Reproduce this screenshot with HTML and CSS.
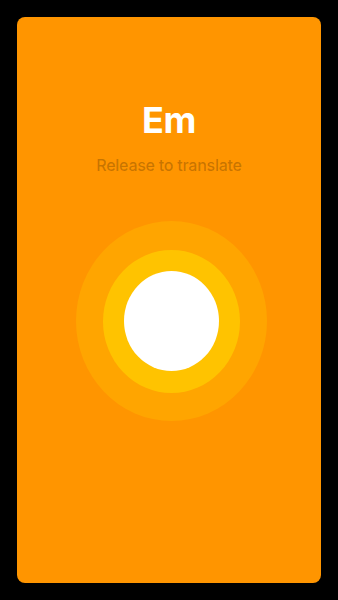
FILE: index.html
```html
<!DOCTYPE html>
<html>
<head>
<meta charset="utf-8">
<link rel="stylesheet" href="styles.css">
</head>
<body>
<div class="card">
  <div class="title">Em</div>
  <div class="hint">Release to translate</div>
  <div class="ring-outer">
    <div class="ring-middle">
      <div class="ring-inner"></div>
    </div>
  </div>
</div>
</body>
</html>
```
FILE: styles.css
```css
html, body {
  margin: 0;
  padding: 0;
  background: #000;
  height: 600px;
  overflow: hidden;
}
body {
  padding: 17px;
  box-sizing: border-box;
  width: 338px;
  font-family: Inter, "Noto Sans", sans-serif;
}
.card {
  background: #ff9500;
  border-radius: 8px;
  width: 304px;
  height: 566px;
  display: flex;
  flex-direction: column;
  align-items: center;
  padding-top: 81px;
  box-sizing: border-box;
}
.title {
  color: #fff;
  font-size: 36px;
  font-weight: 700;
  line-height: 44px;
  letter-spacing: -0.3px;
}
.hint {
  margin-top: 13px;
  color: rgba(0, 0, 0, 0.22);
  font-size: 16px;
  font-weight: 500;
  line-height: 20px;
  letter-spacing: -0.25px;
}
.ring-outer {
  margin-top: 46px;
  margin-left: 5px;
  width: 191px;
  height: 200px;
  border-radius: 50%;
  background: #ffa500;
  display: flex;
  align-items: center;
  justify-content: center;
}
.ring-middle {
  width: 137px;
  height: 143px;
  border-radius: 50%;
  background: #ffc300;
  display: flex;
  align-items: center;
  justify-content: center;
}
.ring-inner {
  width: 95px;
  height: 100px;
  border-radius: 50%;
  background: #fff;
}
```
